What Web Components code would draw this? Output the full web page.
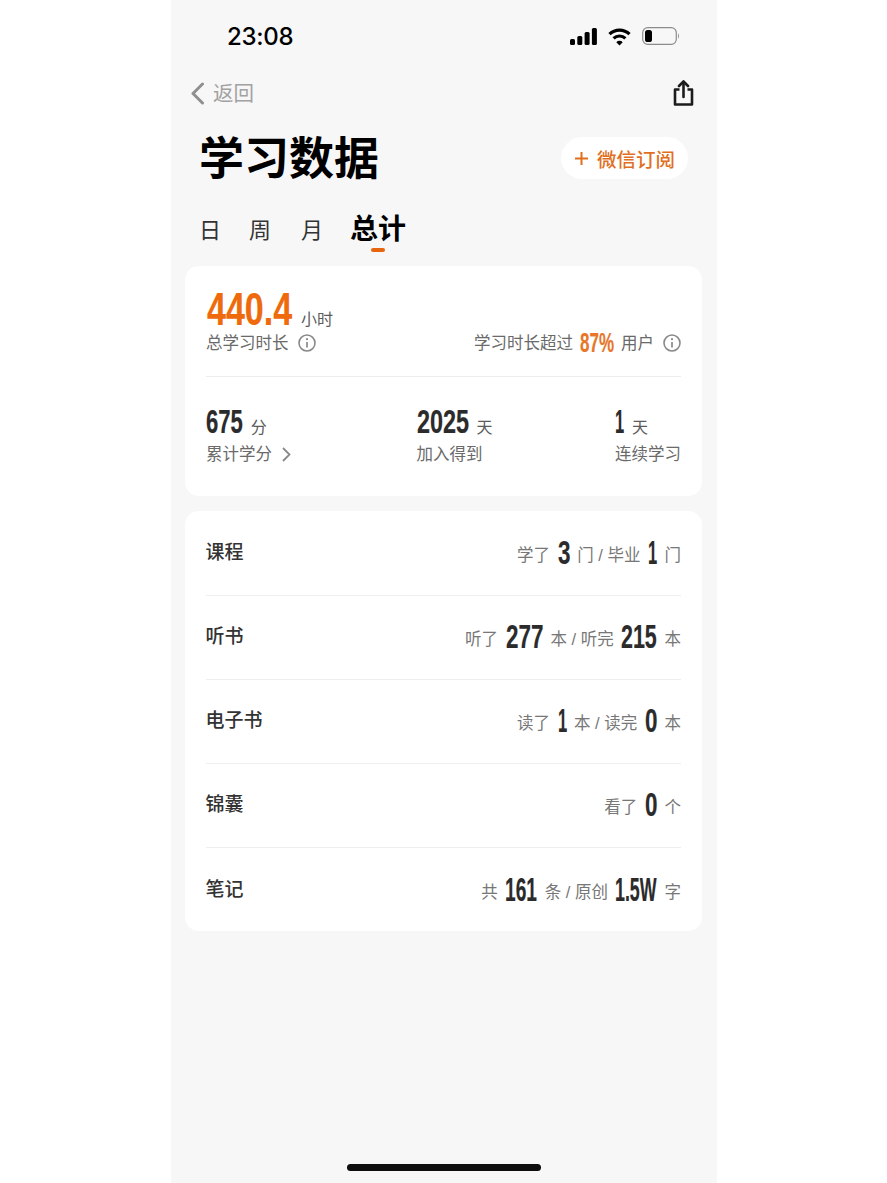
<!DOCTYPE html>
<html lang="zh">
<head>
<meta charset="utf-8">
<title>学习数据</title>
<style>
    html, body { margin: 0; padding: 0; background: #fff; }
    body { padding-left: 1px; font-family: "Liberation Sans", "Noto Sans CJK SC", sans-serif; }
</style>
</head>
<body>
<phone-page>
    <status-bar time="23:08"></status-bar>
    <nav-bar></nav-bar>
    <page-head title="学习数据" action="微信订阅"></page-head>
    <tab-bar></tab-bar>
    <summary-card></summary-card>
    <detail-card>
        <detail-row label="课程">
            <span>学了</span><big-num>3</big-num><span>门 / 毕业</span><big-num squeeze="0.5">1</big-num><span>门</span>
        </detail-row>
        <detail-row label="听书">
            <span>听了</span><big-num>277</big-num><span>本 / 听完</span><big-num squeeze="0.65">215</big-num><span>本</span>
        </detail-row>
        <detail-row label="电子书">
            <span>读了</span><big-num squeeze="0.5">1</big-num><span>本 / 读完</span><big-num>0</big-num><span>本</span>
        </detail-row>
        <detail-row label="锦囊">
            <span>看了</span><big-num>0</big-num><span>个</span>
        </detail-row>
        <detail-row label="笔记" last>
            <span>共</span><big-num squeeze="0.58">161</big-num><span>条 / 原创</span><big-num squeeze="0.54">1.5W</big-num><span>字</span>
        </detail-row>
    </detail-card>
    <home-bar></home-bar>
</phone-page>

<script>
// condensed number, the real font is not installed so squeeze a bold one
class BigNum extends HTMLElement {
    constructor() {
        super();
        this.attachShadow({ mode: 'open' });
        this.shadowRoot.innerHTML = `
        <style>
        :host { display: inline-block; line-height: 1; white-space: nowrap; color: var(--num-color, #2b2b2b); }
        span { display: inline-block; font-weight: 700; transform-origin: left center; -webkit-text-stroke: 0.2px currentColor; }
        </style>
        <span><slot></slot></span>`;
    }

    connectedCallback() {
        const size = this.getAttribute('size') || 33;
        const squeeze = this.getAttribute('squeeze') || 0.68;
        const inner = this.shadowRoot.querySelector('span');
        this.style.fontSize = `${size}px`;
        inner.style.transform = `scaleX(${squeeze})`;
        this.style.width = `${inner.offsetWidth * squeeze}px`;
    }
}
customElements.define('big-num', BigNum);

class InfoIcon extends HTMLElement {
    constructor() {
        super();
        this.attachShadow({ mode: 'open' });
        this.shadowRoot.innerHTML = `
        <style>
        :host { display: inline-flex; width: 18px; height: 18px; }
        </style>
        <svg width="18" height="18" viewBox="0 0 18 18" fill="none" stroke="#8a8a8a">
            <circle cx="9" cy="9" r="8" stroke-width="1.6"/>
            <path d="M9 8v5.4" stroke-width="1.7"/>
            <circle cx="9" cy="5.2" r="1.1" fill="#8a8a8a" stroke="none"/>
        </svg>`;
    }
}
customElements.define('info-icon', InfoIcon);

class PhonePage extends HTMLElement {
    constructor() {
        super();
        this.attachShadow({ mode: 'open' });
        this.shadowRoot.innerHTML = `
        <style>
        :host {
            display: flex;
            flex-direction: column;
            box-sizing: border-box;
            width: 546px;
            height: 1183px;
            margin: 0 auto;
            background: #f7f7f7;
            overflow: hidden;
        }
        </style>
        <slot></slot>`;
    }
}
customElements.define('phone-page', PhonePage);

class StatusBar extends HTMLElement {
    constructor() {
        super();
        this.attachShadow({ mode: 'open' });
        this.shadowRoot.innerHTML = `
        <style>
        :host {
            display: flex;
            align-items: center;
            justify-content: space-between;
            height: 72px;
            padding: 0 37px 0 56px;
            box-sizing: border-box;
        }
        .time { margin-top: 1px; font: 500 24px/1 Inter, "Liberation Sans", sans-serif; color: #000; letter-spacing: -0.3px; }
        .icons { display: flex; align-items: center; gap: 11px; }
        svg { display: block; }
        </style>
        <div class="time"></div>
        <div class="icons">
            <svg width="27" height="17" viewBox="0 0 27 17" fill="#000">
                <rect x="0" y="11" width="5" height="6" rx="1.5"/>
                <rect x="7.3" y="8" width="5" height="9" rx="1.5"/>
                <rect x="14.6" y="4" width="5" height="13" rx="1.5"/>
                <rect x="21.9" y="0" width="5" height="17" rx="1.5"/>
            </svg>
            <svg width="23" height="19" viewBox="0 0 23 19" fill="none" stroke="#000" stroke-width="3.2">
                <path d="M1.5 7.200a14.200 14.200 0 0 1 20 0"/>
                <path d="M5.600 11.400a8.400 8.400 0 0 1 11.800 0"/>
                <path d="M11.500 18.600l-3.200-3.400a4.400 4.400 0 0 1 6.400 0z" fill="#000" stroke="none"/>
            </svg>
            <svg width="38" height="18" viewBox="0 0 38 18" fill="none">
                <rect x="0.7" y="0.7" width="33.6" height="16.6" rx="5" stroke="#8c8c8c" stroke-width="1.2"/>
                <rect x="3" y="3" width="7" height="12" rx="2.6" fill="#000"/>
                <path d="M36 6.500c1.400.5 1.400 4.500 0 5z" fill="#9a9a9a"/>
            </svg>
        </div>`;
    }

    connectedCallback() {
        this.shadowRoot.querySelector('.time').textContent = this.getAttribute('time');
    }
}
customElements.define('status-bar', StatusBar);

class NavBar extends HTMLElement {
    constructor() {
        super();
        this.attachShadow({ mode: 'open' });
        this.shadowRoot.innerHTML = `
        <style>
        :host {
            display: flex;
            align-items: center;
            justify-content: space-between;
            height: 42px;
            padding: 0 23px 0 20px;
            box-sizing: border-box;
        }
        .back { display: flex; align-items: center; gap: 9px; color: #a2a2a2; font-size: 20.500px; line-height: 1; }
        .back span { margin-top: 2px; }
        svg { display: block; }
        </style>
        <div class="back">
            <svg width="13" height="23" viewBox="0 0 13 23" fill="none" stroke="#8f8f8f" stroke-width="3" stroke-linecap="round" stroke-linejoin="round">
                <path d="M11.500 2L2 11.500l9.500 9.500"/>
            </svg>
            <span>返回</span>
        </div>
        <svg width="21" height="26" viewBox="0 0 21 26" fill="none" stroke="#1c1c1c" stroke-width="2.600" stroke-linejoin="round">
            <path d="M6.500 9.500H2v15h17v-15h-4.500"/>
            <path d="M10.500 17V2" stroke-linecap="round"/>
            <path d="M6 6l4.500-4.500L15 6" stroke-linecap="round"/>
        </svg>`;
    }
}
customElements.define('nav-bar', NavBar);

class PageHead extends HTMLElement {
    constructor() {
        super();
        this.attachShadow({ mode: 'open' });
        this.shadowRoot.innerHTML = `
        <style>
        :host {
            display: flex;
            align-items: center;
            justify-content: space-between;
            height: 88px;
            padding: 0 29px 0 28px;
            box-sizing: border-box;
        }
        h1 { margin: 2px 0 0; font-size: 45px; line-height: 1; font-weight: 700; color: #000; }
        .btn {
            display: flex;
            align-items: center;
            gap: 9px;
            height: 42px;
            padding: 0 13px 0 14px;
            border-radius: 21px;
            background: #fff;
            color: #e0701f;
            font-size: 19.500px;
            font-weight: 500;
        }
        svg { display: block; }
        </style>
        <h1></h1>
        <div class="btn">
            <svg width="13" height="13" viewBox="0 0 13 13" stroke="#e0701f" stroke-width="2">
                <path d="M6.500 0v13M0 6.500h13"/>
            </svg>
            <span class="label"></span>
        </div>`;
    }

    connectedCallback() {
        this.shadowRoot.querySelector('h1').textContent = this.getAttribute('title');
        this.shadowRoot.querySelector('.label').textContent = this.getAttribute('action');
    }
}
customElements.define('page-head', PageHead);

class TabBar extends HTMLElement {
    constructor() {
        super();
        this.attachShadow({ mode: 'open' });
        this.shadowRoot.innerHTML = `
        <style>
        :host {
            display: flex;
            align-items: flex-end;
            gap: 28px;
            height: 64px;
            padding: 0 0 14px 28px;
            box-sizing: border-box;
            color: #333;
            font-size: 22px;
            line-height: 1;
        }
        div { position: relative; padding-bottom: 10px; }
        .month { margin-left: 2px; }
        .on { margin-left: -1px; padding-bottom: 8px; font-size: 28px; font-weight: 700; color: #000; }
        .on::after {
            content: "";
            position: absolute;
            left: 21px;
            bottom: 0;
            width: 14px;
            height: 4px;
            border-radius: 2px;
            background: #e8650f;
        }
        </style>
        <div>日</div><div>周</div><div class="month">月</div><div class="on">总计</div>`;
    }
}
customElements.define('tab-bar', TabBar);

class SummaryCard extends HTMLElement {
    constructor() {
        super();
        this.attachShadow({ mode: 'open' });
        this.shadowRoot.innerHTML = `
        <style>
        :host {
            display: block;
            box-sizing: border-box;
            height: 230px;
            margin: 0 15px 15px 14px;
            padding: 0 21px;
            background: #fff;
            border-radius: 14px;
            color: #6a6a6a;
            font-size: 16.500px;
            line-height: 1;
        }
        .top {
            display: flex;
            justify-content: space-between;
            align-items: flex-end;
            height: 111px;
            box-sizing: border-box;
            padding-bottom: 24px;
            border-bottom: 1px solid #ededed;
        }
        .line { display: flex; align-items: baseline; gap: 8px; }
        .hours { --num-color: #ee6a0c; gap: 9px; margin: 0 0 2px 1px; }
        .unit { color: #5c5c5c; font-size: 16px; }
        .row { display: flex; align-items: center; gap: 9px; }
        .beat { gap: 7px; }
        .beat big-num { --num-color: #e8762a; margin: -5px 0; }
        .beat info-icon { margin-left: 2px; }
        .bottom { display: flex; justify-content: space-between; padding-top: 28px; }
        .stat .line { margin-bottom: 8px; }
        .mid { margin-left: 3px; }
        .more { display: flex; align-items: center; gap: 10px; }
        svg { display: block; }
        </style>
        <div class="top">
            <div>
                <div class="line hours"><big-num size="46" squeeze="0.74">440.4</big-num><span class="unit">小时</span></div>
                <div class="row">总学习时长<info-icon></info-icon></div>
            </div>
            <div class="row beat">学习时长超过<big-num size="27" squeeze="0.63">87%</big-num>用户<info-icon></info-icon></div>
        </div>
        <div class="bottom">
            <div class="stat">
                <div class="line"><big-num squeeze="0.67">675</big-num><span class="unit">分</span></div>
                <div class="more">累计学分
                    <svg width="9" height="15" viewBox="0 0 9 15" fill="none" stroke="#8a8a8a" stroke-width="1.800"><path d="M1 1l6.500 6.500L1 14"/></svg>
                </div>
            </div>
            <div class="stat mid">
                <div class="line"><big-num squeeze="0.71">2025</big-num><span class="unit">天</span></div>
                <div>加入得到</div>
            </div>
            <div class="stat">
                <div class="line"><big-num squeeze="0.5">1</big-num><span class="unit">天</span></div>
                <div>连续学习</div>
            </div>
        </div>`;
    }
}
customElements.define('summary-card', SummaryCard);

class DetailCard extends HTMLElement {
    constructor() {
        super();
        this.attachShadow({ mode: 'open' });
        this.shadowRoot.innerHTML = `
        <style>
        :host {
            display: block;
            box-sizing: border-box;
            height: 420px;
            margin: 0 15px 0 14px;
            padding: 1px 21px 0;
            background: #fff;
            border-radius: 14px;
        }
        </style>
        <slot></slot>`;
    }
}
customElements.define('detail-card', DetailCard);

class DetailRow extends HTMLElement {
    constructor() {
        super();
        this.attachShadow({ mode: 'open' });
        this.shadowRoot.innerHTML = `
        <style>
        :host {
            display: flex;
            align-items: center;
            justify-content: space-between;
            box-sizing: border-box;
            height: 84px;
            padding-bottom: 2px;
            border-bottom: 1px solid #eeeeee;
            line-height: 1;
        }
        :host([last]) { border-bottom: 0; }
        .label { margin-left: -0.500px; font-size: 19px; font-weight: 500; color: #333; }
        .value { display: flex; align-items: center; gap: 7.500px; color: #777; font-size: 16.500px; }
        ::slotted(span) { margin-top: 6px; }
        </style>
        <div class="label"></div>
        <div class="value"><slot></slot></div>`;
    }

    connectedCallback() {
        this.shadowRoot.querySelector('.label').textContent = this.getAttribute('label');
    }
}
customElements.define('detail-row', DetailRow);

class HomeBar extends HTMLElement {
    constructor() {
        super();
        this.attachShadow({ mode: 'open' });
        this.shadowRoot.innerHTML = `
        <style>
        :host {
            display: block;
            width: 194px;
            height: 7px;
            margin: auto auto 12px;
            border-radius: 4px;
            background: #0d0d0d;
        }
        </style>`;
    }
}
customElements.define('home-bar', HomeBar);
</script>
</body>
</html>
